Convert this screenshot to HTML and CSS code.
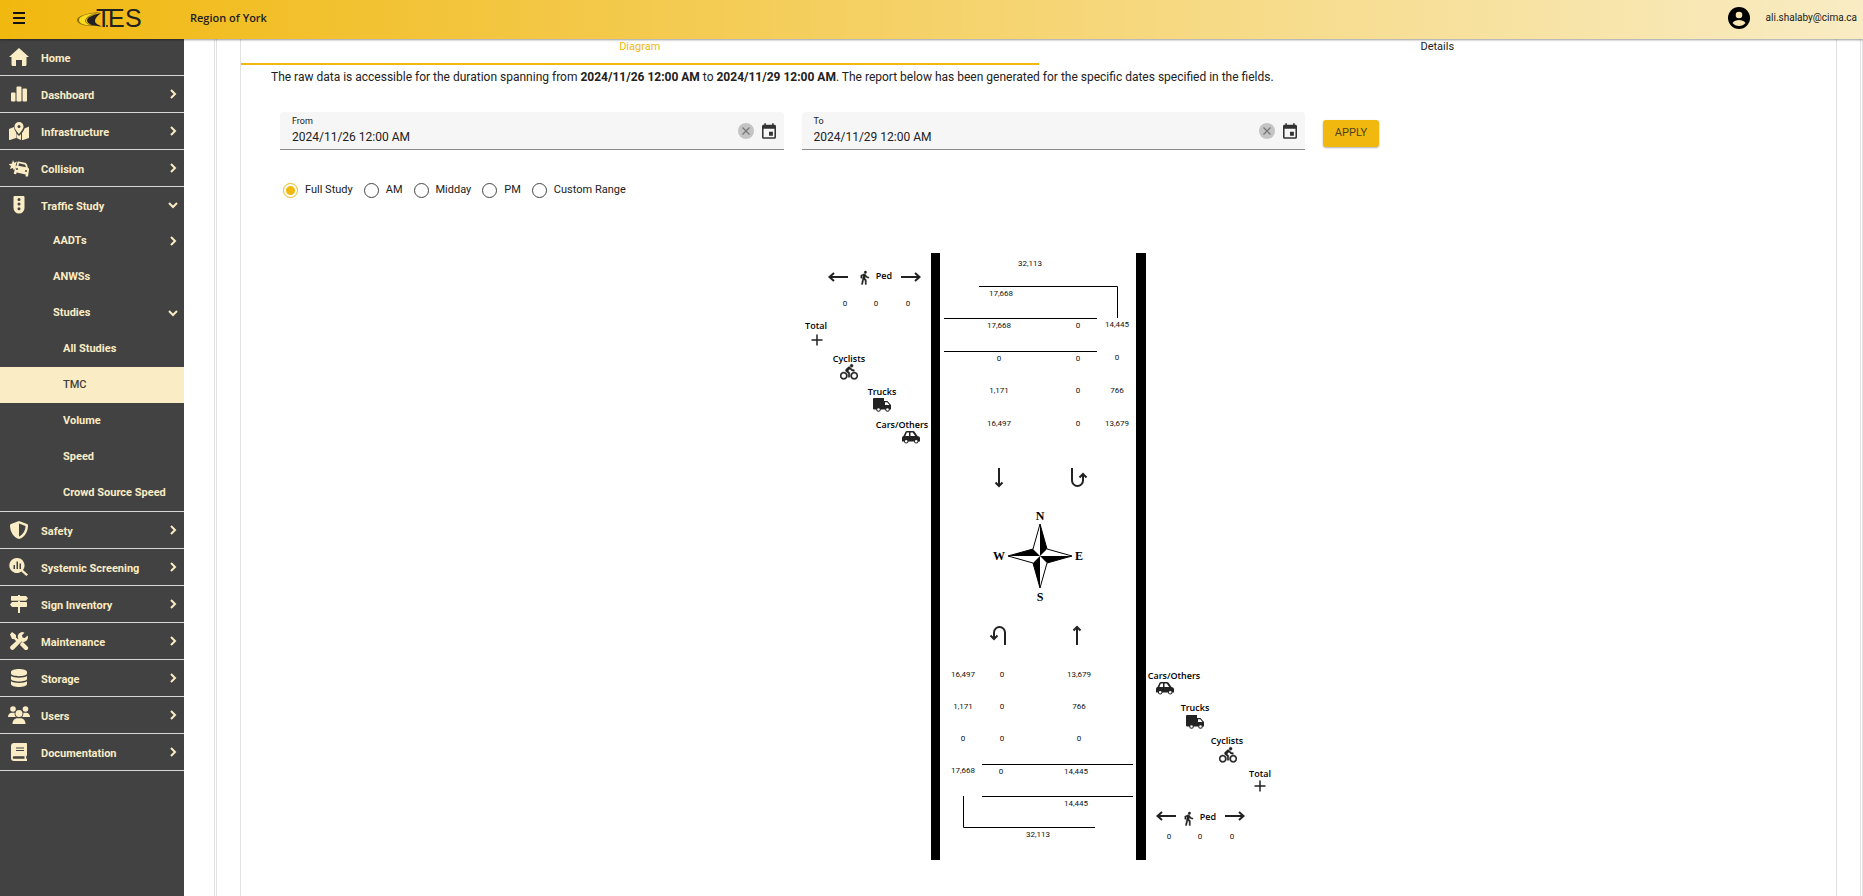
FILE: index.html
```html
<!DOCTYPE html>
<html lang="en">
<head>
<meta charset="utf-8">
<title>TES - Traffic Study TMC</title>
<link rel="stylesheet" href="styles.css">
</head>
<body>
<svg class="sprite" aria-hidden="true">
  <symbol id="chev" viewBox="0 0 10 10"><path d="M3 1l4 4-4 4" fill="none" stroke="currentColor" stroke-width="2"/></symbol>
  <symbol id="chev-down" viewBox="0 0 10 10"><path d="M1 3l4 4 4-4" fill="none" stroke="currentColor" stroke-width="2"/></symbol>
  <symbol id="clear" viewBox="0 0 16 16"><circle cx="8" cy="8" r="8" fill="#c4c4c4"/><path d="M4.500 4.500l7 7M11.500 4.500l-7 7" stroke="#757575" stroke-width="1.200"/></symbol>
  <symbol id="calendar" viewBox="3 1 18 20"><path d="M17 12h-5v5h5v-5zM16 1v2H8V1H6v2H5c-1.110 0-2 .9-2 2v14a2 2 0 0 0 2 2h14c1.100 0 2-.9 2-2V5c0-1.100-.9-2-2-2h-1V1h-2zm3 18H5V8h14v11z" fill="#333"/></symbol>
  <symbol id="walk" viewBox="0 0 24 24"><path d="M13.500 5.500c1.100 0 2-.9 2-2s-.9-2-2-2-2 .9-2 2 .9 2 2 2zM9.800 8.900 7 23h2.100l1.800-8 2.100 2v6h2v-7.500l-2.100-2 .6-3C14.800 12 16.800 13 19 13v-2c-1.900 0-3.500-1-4.300-2.400l-1-1.600c-.4-.6-1-1-1.700-1-.3 0-.5.1-.8.1L6 8.300V13h2V9.600l1.800-.7" stroke="#222" stroke-width=".6"/></symbol>
  <symbol id="bike" viewBox="0 0 24 24"><path d="M15.500 5.500c1.100 0 2-.9 2-2s-.9-2-2-2-2 .9-2 2 .9 2 2 2zM5 12c-2.800 0-5 2.200-5 5s2.200 5 5 5 5-2.200 5-5-2.200-5-5-5zm0 8.200c-1.800 0-3.200-1.400-3.200-3.200s1.400-3.200 3.200-3.200 3.200 1.400 3.200 3.200-1.400 3.200-3.200 3.200zm5.800-9.700 2.400-2.400.8.800c1.300 1.300 3 2.100 5.100 2.100V9c-1.500 0-2.700-.6-3.600-1.500l-1.900-1.900c-.5-.4-1-.6-1.600-.6s-1.100.2-1.400.6L7.800 8.400c-.4.4-.6.900-.6 1.400 0 .6.200 1.100.6 1.400L11 14v5h2v-6.200l-2.200-2.300zM19 12c-2.800 0-5 2.200-5 5s2.200 5 5 5 5-2.200 5-5-2.200-5-5-5zm0 8.200c-1.800 0-3.200-1.400-3.200-3.200s1.400-3.200 3.200-3.200 3.200 1.400 3.200 3.200-1.400 3.200-3.200 3.200z" stroke="#222" stroke-width=".5"/></symbol>
  <symbol id="truck" viewBox="0 0 18 14"><path fill-rule="evenodd" d="M1 0h10v3h3.500L18 7v4.500h-1.200a2.300 2.300 0 0 1-4.600 0H7.800a2.300 2.300 0 0 1-4.600 0H1a1 1 0 0 1-1-1V1a1 1 0 0 1 1-1zm11 4.200V7h4.500l-2.300-2.800zM5.500 10.200a1.300 1.300 0 1 0 0 2.600 1.300 1.300 0 0 0 0-2.600zm9 0a1.300 1.300 0 1 0 0 2.600 1.300 1.300 0 0 0 0-2.600z"/></symbol>
  <symbol id="car" viewBox="0 0 18 13"><path fill-rule="evenodd" d="M5 0h6c.6 0 1 .2 1.400.6L15.500 5l1.500.5c.6.300 1 .9 1 1.500v3.500h-1.400a2.400 2.400 0 0 1-4.700 0H6.600a2.400 2.400 0 0 1-4.700 0H0V7c0-1 .5-1.800 1.500-2L3.500.8C3.800.3 4.300 0 5 0zm-.2 1.500L3.400 5H7V1.500zm3.700 0V5h4.700l-2.500-3.500zM4.200 8.900a1.300 1.300 0 1 0 0 2.600 1.300 1.300 0 0 0 0-2.600zm10 0a1.300 1.300 0 1 0 0 2.600 1.300 1.300 0 0 0 0-2.600z"/></symbol>
  <symbol id="plus" viewBox="0 0 12 12"><path d="M6 .5v11M.5 6h11" stroke="#222" stroke-width="1.500"/></symbol>
  <symbol id="arrow" viewBox="0 0 20 10"><path d="M0 5h18M14 1l4.500 4L14 9" fill="none" stroke="#222" stroke-width="2"/></symbol>
  <symbol id="up" viewBox="0 0 10 20"><path d="M5 20V2M1.500 5.500 5 2l3.500 3.500" fill="none" stroke="#222" stroke-width="2"/></symbol>
  <symbol id="uturn" viewBox="0 0 18 20"><path d="M2 0v12.500a5.500 5.500 0 0 0 11 0V6M9.500 9.500 13 6l3.500 3.500" fill="none" stroke="#222" stroke-width="2"/></symbol>
</svg>

<header class="topbar">
  <button class="menu" aria-label="Toggle menu"><svg width="14" height="12" viewBox="0 0 14 12"><path d="M1 1h12M1 6h12M1 11h12" stroke="#111" stroke-width="2"/></svg></button>
  <svg class="logo" width="68" height="36" viewBox="0 0 68 36" role="img" aria-label="TES">
    <path d="M24 12C11 13 1 16 1 20c0 3 5 6 15 6h6c-9-1-13-3-12-6 1-3 6-5 14-8z" fill="#8a6d0c"/>
    <path d="M20 13C10 14 3 16.500 3 20s5 5 12 5.500C9 23.500 8 21 10 18.500 12 16 15 14.500 20 13z" fill="#f9dc1c"/>
    <path d="M25 13c-9 2-14 4.500-14 7.500 0 3.500 6 5.500 15 6-5-2-7-3.500-7-5.500 0-2.500 2-5 6-8z" fill="#222"/>
    <text class="logo-text" x="20" y="27">T</text><text class="logo-text" x="32" y="27">E</text><text class="logo-text" x="49" y="27">S</text>
    <circle cx="31" cy="26" r="1" fill="#222"/>
  </svg>
  <strong class="region">Region of York</strong>
  <div class="account">
    <svg width="22" height="22" viewBox="0 0 22 22"><circle cx="11" cy="11" r="11"/><circle cx="11" cy="8" r="3.300" fill="#f9e6b3"/><path d="M4.500 16c1.500-2.200 4-3 6.500-3s5 .8 6.500 3c-1.500 2-4 3-6.500 3s-5-1-6.500-3z" fill="#f9e6b3"/></svg>
    <span>ali.shalaby@cima.ca</span>
  </div>
</header>

<div class="shell">
<nav class="sidebar">
  <a class="item" href="#"><svg class="ico" viewBox="0 0 20 18"><path d="M10 0 0 9h2.500v7.500c0 .8.500 1.500 1.500 1.500h3v-6h6v6h3c1 0 1.500-.7 1.500-1.500V9H20z"/></svg><span>Home</span></a>
  <a class="item" href="#"><svg class="ico" viewBox="0 0 20 18"><rect x="2" y="7.500" width="4.500" height="9" rx="1"/><rect x="7.500" y="1.500" width="5" height="15" rx="1"/><rect x="13.500" y="3.500" width="4.500" height="13" rx="1"/></svg><span>Dashboard</span><svg class="chev"><use href="#chev"/></svg></a>
  <a class="item" href="#"><svg class="ico" viewBox="0 0 20 18"><path fill-rule="evenodd" d="M10 0a4.500 4.500 0 0 1 4.500 4.500C14.500 7 11 11 10 12 9 11 5.500 7 5.500 4.500A4.500 4.500 0 0 1 10 0zm0 3a1.500 1.500 0 1 0 0 3 1.500 1.500 0 0 0 0-3z"/><path d="M0 7l5-2c.2 2 1.200 4 2.200 5.500L7 16 1 18H0zM13 11c1-1 2-3 2.500-4.500L20 4.500V16l-6 2h-1zM7.500 11.500 10 14l2-2v6l-4.500-2z"/></svg><span>Infrastructure</span><svg class="chev"><use href="#chev"/></svg></a>
  <a class="item" href="#"><svg class="ico" viewBox="0 0 20 18"><path fill-rule="evenodd" d="M4 1l1.200 2.700L8 2.500 7 5l-.8 5-1.700 1-.5-2-3 1 1-3-2.500-1.500L3 4.500zM9.500 2.500l6.500 1.200c1 .3 1.500.8 2 1.800l.8 3c1 .5 1.400 1.500 1.200 2.500l-1 6.500h-2.500l.2-2-9-2-.7 1.800-2.300-.5L6.400 8c.2-.8.700-1.300 1.300-1.600L8.200 3.600c.200-.8.700-1.100 1.300-1.100zM10 4.300l-.6 2.500 7.500 1.500-.8-2.500zM8 9a1 1 0 1 0 0 2 1 1 0 0 0 0-2zm9 2a1 1 0 1 0 0 2 1 1 0 0 0 0-2z"/></svg><span>Collision</span><svg class="chev"><use href="#chev"/></svg></a>
  <div class="group">
    <a class="item" href="#"><svg class="ico" viewBox="0 0 20 18"><path fill-rule="evenodd" d="M5.500 0h9c.8 0 1 .6 1 1.300V12a5.500 5.500 0 0 1-11 0V1.300C4.500.6 4.700 0 5.500 0zM10 2a1.500 1.500 0 1 0 0 3 1.500 1.500 0 0 0 0-3zm0 4.600a1.500 1.500 0 1 0 0 3 1.500 1.500 0 0 0 0-3zm0 4.600a1.500 1.500 0 1 0 0 3 1.500 1.500 0 0 0 0-3z"/></svg><span>Traffic Study</span><svg class="chev"><use href="#chev-down"/></svg></a>
    <a class="sub" href="#"><span>AADTs</span><svg class="chev"><use href="#chev"/></svg></a>
    <a class="sub" href="#"><span>ANWSs</span></a>
    <a class="sub" href="#"><span>Studies</span><svg class="chev"><use href="#chev-down"/></svg></a>
    <a class="sub leaf" href="#">All Studies</a>
    <a class="sub leaf active" href="#">TMC</a>
    <a class="sub leaf" href="#">Volume</a>
    <a class="sub leaf" href="#">Speed</a>
    <a class="sub leaf" href="#">Crowd Source Speed</a>
  </div>
  <a class="item" href="#"><svg class="ico" viewBox="0 0 20 18"><path fill-rule="evenodd" d="M10 0l8 3c.7.300 1 .7 1 1.400C19 10 16 16 10 18 4 16 1 10 1 4.400 1 3.700 1.300 3.300 2 3zm0 2.500v13c4-1.800 6.500-6 6.500-10.500z"/></svg><span>Safety</span><svg class="chev"><use href="#chev"/></svg></a>
  <a class="item" href="#"><svg class="ico" viewBox="0 0 20 18"><path fill-rule="evenodd" d="M8 0a7.500 7.500 0 0 1 6 12l5 4.500-1.700 1.500-5-4.500A7.500 7.500 0 1 1 8 0zM4.500 7v4H6V7zm3-3.500V11H9V3.500zm3 2V11H12V5.500z"/></svg><span>Systemic Screening</span><svg class="chev"><use href="#chev"/></svg></a>
  <a class="item" href="#"><svg class="ico" viewBox="0 0 20 18"><path d="M9 0h2v1h6l2 2.300L17 5.700H3c-.6 0-1-.4-1-1V2c0-.6.4-1 1-1h6zM9 6h2v1h6c.6 0 1 .4 1 1v3c0 .6-.4 1-1 1h-6v6H9v-6H3L1 9.500 3 7h6z"/></svg><span>Sign Inventory</span><svg class="chev"><use href="#chev"/></svg></a>
  <a class="item" href="#"><svg class="ico" viewBox="0 0 20 18"><path d="M3 0l4 3v2.500l3 2.500-2 2-3-3H3L1 2.500zM18.500 3.500a4.500 4.500 0 0 1-6 6L5 17.200a2.200 2.200 0 0 1-3.200-3.200L9.500 7a4.500 4.500 0 0 1 6-6.300L13 3.200 13.500 5.500l2.300.5zM12 10.500l2-.5 4.500 4.500a2 2 0 0 1-3 3L11 13z"/></svg><span>Maintenance</span><svg class="chev"><use href="#chev"/></svg></a>
  <a class="item" href="#"><svg class="ico" viewBox="0 0 20 18"><path d="M2 3c0-4 16-4 16 0v1.500c0 3.500-16 3.500-16 0zM2 7c3 2.200 13 2.200 16 0v3c0 3.300-16 3.300-16 0zM2 12.300c3 2.200 13 2.200 16 0V15c0 4-16 4-16 0z"/></svg><span>Storage</span><svg class="chev"><use href="#chev"/></svg></a>
  <a class="item" href="#"><svg class="ico wide" viewBox="0 0 22 18"><circle cx="5" cy="3" r="2.800"/><circle cx="17.500" cy="3" r="2.800"/><circle cx="11" cy="7.500" r="3.500"/><path d="M0 11c0-2.500 1.500-4.200 4-4.200h1.500c.5 0 .8.100 1.200.3-.2 1.600.3 3 1.300 3.900zM22 11c0-2.500-1.500-4.200-4-4.200h-1.500c-.5 0-.8.1-1.200.3.200 1.600-.3 3-1.300 3.900zM4.500 18c0-3.500 2-5.800 5-5.800h3c3 0 5 2.300 5 5.800z"/></svg><span>Users</span><svg class="chev"><use href="#chev"/></svg></a>
  <a class="item" href="#"><svg class="ico" viewBox="0 0 20 18"><path fill-rule="evenodd" d="M5 0h12c.6 0 1 .4 1 1v11c0 .6-.3.9-.8 1v2.800H18V18H5c-2 0-3-1.200-3-3V3c0-1.800 1.200-3 3-3zm0 13.200c-1.600 0-1.600 2.600 0 2.600h10.500v-2.600zM7 4.500v1h8v-1zm0 2.500v1h8V7z"/></svg><span>Documentation</span><svg class="chev"><use href="#chev"/></svg></a>
</nav>

<main class="content">
  <div class="card"><div class="inner"><section class="panel">
    <div class="tabs" role="tablist">
      <button class="tab selected" role="tab" aria-selected="true">Diagram</button>
      <button class="tab" role="tab" aria-selected="false">Details</button>
    </div>
    <p class="intro">The raw data is accessible for the duration spanning from <b>2024/11/26 12:00 AM</b> to <b>2024/11/29 12:00 AM</b>. The report below has been generated for the specific dates specified in the fields.</p>
    <form class="filters">
      <div class="field">
        <div class="entry"><label for="from">From</label><input id="from" type="text" value="2024/11/26 12:00 AM"></div>
        <button type="button" class="icon-btn" aria-label="Clear from"><svg width="16" height="16"><use href="#clear"/></svg></button>
        <button type="button" class="icon-btn" aria-label="Pick from date"><svg width="14" height="16"><use href="#calendar"/></svg></button>
      </div>
      <div class="field">
        <div class="entry"><label for="to">To</label><input id="to" type="text" value="2024/11/29 12:00 AM"></div>
        <button type="button" class="icon-btn" aria-label="Clear to"><svg width="16" height="16"><use href="#clear"/></svg></button>
        <button type="button" class="icon-btn" aria-label="Pick to date"><svg width="14" height="16"><use href="#calendar"/></svg></button>
      </div>
      <button type="button" class="apply">APPLY</button>
    </form>
    <div class="periods">
      <label><input type="radio" name="period" checked>Full Study</label>
      <label><input type="radio" name="period">AM</label>
      <label><input type="radio" name="period">Midday</label>
      <label><input type="radio" name="period">PM</label>
      <label><input type="radio" name="period">Custom Range</label>
    </div>

    <svg class="diagram" width="480" height="607" viewBox="799 253 480 607" role="img" aria-label="Turning movement counts">
      <path d="M931 253h9v607h-9zM1136 253h10v607h-10z"/>
      <path class="line" d="M979 286.500h138.500V318M944 318.500h153M944 351.500h153M982 764.500h151M982 796.500h151M963.500 796v31.500H1095"/>
      <g class="count">
        <text x="1030" y="266">32,113</text><text x="1001" y="296">17,668</text>
        <text x="999" y="328">17,668</text><text x="1078" y="328">0</text><text x="1117" y="327">14,445</text>
        <text x="999" y="361">0</text><text x="1078" y="361">0</text><text x="1117" y="360">0</text>
        <text x="999" y="393">1,171</text><text x="1078" y="393">0</text><text x="1117" y="393">766</text>
        <text x="999" y="426">16,497</text><text x="1078" y="426">0</text><text x="1117" y="426">13,679</text>
        <text x="845" y="306">0</text><text x="876" y="306">0</text><text x="908" y="306">0</text>
        <text x="963" y="677">16,497</text><text x="1002" y="677">0</text><text x="1079" y="677">13,679</text>
        <text x="963" y="709">1,171</text><text x="1002" y="709">0</text><text x="1079" y="709">766</text>
        <text x="963" y="741">0</text><text x="1002" y="741">0</text><text x="1079" y="741">0</text>
        <text x="963" y="773">17,668</text><text x="1001" y="774">0</text><text x="1076" y="774">14,445</text>
        <text x="1076" y="806">14,445</text><text x="1038" y="837">32,113</text>
        <text x="1169" y="839">0</text><text x="1200" y="839">0</text><text x="1232" y="839">0</text>
      </g>
      <g class="kind">
        <text x="884" y="279">Ped</text><text x="816" y="329">Total</text><text x="849" y="362">Cyclists</text><text x="882" y="395">Trucks</text><text x="902" y="428">Cars/Others</text>
        <text x="1174" y="679">Cars/Others</text><text x="1195" y="711">Trucks</text><text x="1227" y="744">Cyclists</text><text x="1260" y="777">Total</text><text x="1208" y="820">Ped</text>
      </g>
      <g class="glyph">
        <use href="#arrow" width="20" height="10" transform="translate(848 282) rotate(180)"/><use href="#walk" x="857" y="270" width="15" height="15"/><use href="#arrow" x="901" y="272" width="20" height="10"/>
        <use href="#plus" x="811" y="334" width="12" height="12"/><use href="#bike" x="840" y="363" width="18" height="18"/><use href="#truck" x="873" y="398" width="18" height="14"/><use href="#car" x="902" y="431" width="18" height="13"/>
        <use href="#car" x="1156" y="682" width="18" height="13"/><use href="#truck" x="1186" y="715" width="18" height="14"/><use href="#bike" x="1219" y="746" width="18" height="18"/><use href="#plus" x="1254" y="780" width="12" height="12"/>
        <use href="#arrow" width="20" height="10" transform="translate(1176 821) rotate(180)"/><use href="#walk" x="1181" y="811" width="15" height="15"/><use href="#arrow" x="1225" y="811" width="20" height="10"/>
        <use href="#up" width="10" height="20" transform="translate(1004 488) rotate(180)"/><use href="#uturn" x="1070" y="468" width="18" height="20"/>
        <use href="#uturn" width="18" height="20" transform="translate(1007 645) rotate(180)"/><use href="#up" x="1072" y="625" width="10" height="20"/>
      </g>
      <g class="rose">
        <path class="pale" d="M1040 524l7 25 25 7-25 7-7 25-7-25-25-7 25-7z"/>
        <path d="M1040 524l7 25-7 7zM1072 556l-25 7-7-7zM1040 588l-7-25 7-7zM1008 556l25-7 7 7z"/>
        <text x="1040" y="520">N</text><text x="1079" y="560">E</text><text x="1040" y="601">S</text><text x="999" y="560">W</text>
      </g>
    </svg>
  </section></div></div>
</main>
</div>
</body>
</html>
```
FILE: styles.css
```css
* { box-sizing: border-box; }
body { margin: 0; height: 100vh; overflow: hidden; display: flex; flex-direction: column; font: 11px/16px Roboto, "Noto Sans", sans-serif; color: #212121; background: #fff; }
button { border: 0; padding: 0; background: none; font: inherit; color: inherit; cursor: pointer; }
.sprite { display: none; }

.topbar { flex: none; height: 39px; padding: 0 6px 3px 12px; display: flex; align-items: center; background: linear-gradient(90deg, #f1b80f, #f9ecc4); box-shadow: 0 1px 2px rgba(0, 0, 0, .4); z-index: 1; }
.menu { width: 14px; height: 36px; display: flex; align-items: center; }
.logo { margin-left: 50px; }
.logo-text { font: 25px/30px "Liberation Sans", sans-serif; fill: #222; }
.region { margin-left: 46px; font-family: "Open Sans", sans-serif; font-weight: 600; }
.account { margin-left: auto; display: flex; align-items: center; gap: 16px; font-size: 10px; }

.shell { flex: 1; min-height: 0; display: flex; }
.sidebar { width: 184px; flex: none; background: #424242; color: #faecc4; }
.sidebar a { display: flex; align-items: center; color: inherit; text-decoration: none; font-weight: 700; }
.item { height: 37px; padding: 0 6px 0 9px; border-bottom: 1px solid #d8d8d8; }
.item span { padding: 4px 0 0 12px; }
.ico { width: 20px; height: 18px; fill: currentColor; }
.ico.wide { width: 22px; margin: 0 -1px; }
.chev { width: 10px; height: 10px; margin-left: auto; }
.group { border-bottom: 1px solid #d8d8d8; }
.group .item { height: 36px; border: 0; }
.sub { height: 36px; padding: 0 6px 1px 53px; }
.leaf { padding-left: 63px; }
.sidebar .active { background: #faecc4; color: #424242; font-weight: 500; }

.content { flex: 1; min-width: 0; padding-left: 30px; display: flex; }
.card { flex: 1; display: flex; border: solid #e2e2e2; border-width: 0 1px; padding: 0 1px; }
.inner { flex: 1; display: flex; border: solid #e2e2e2; border-width: 0 1px; padding: 0 23px; }
.panel { flex: 1; min-width: 0; border: solid #e2e2e2; border-width: 0 1px; }
.tabs { display: flex; height: 26px; }
.tab { flex: 1; padding-bottom: 8px; border-bottom: 2px solid transparent; }
.tab.selected { color: #f1b80f; border-color: #f1b80f; }
.intro { margin: 4px 30px 27px; font-size: 12px; }
.filters { display: flex; align-items: center; gap: 18px; padding: 0 457px 0 39px; }
.field { flex: 1; height: 38px; display: flex; align-items: center; gap: 8px; padding: 0 8px 0 12px; background: #f6f6f6; border-bottom: 1px solid #8a8a8a; border-radius: 4px 4px 0 0; }
.entry { flex: 1; min-width: 0; display: flex; flex-direction: column; padding-bottom: 2px; }
.entry label { font-size: 9px; line-height: 14px; }
.entry input { border: 0; padding: 0; height: 18px; background: none; font: inherit; font-size: 12px; color: inherit; outline: 0; }
.icon-btn { display: flex; }
.apply { width: 56px; height: 27px; margin-top: 4px; border-radius: 3px; background: #f1b80f; color: #4d421f; box-shadow: 0 1px 2px rgba(0, 0, 0, .3); }
.periods { display: flex; gap: 11px; margin: 32px 0 0 42px; }
.periods label { display: flex; align-items: center; gap: 7px; }
.periods input { appearance: none; width: 15px; height: 15px; margin: 0; border: 1px solid #444; border-radius: 50%; }
.periods input:checked { border-color: #f1b80f; background: radial-gradient(#f1b80f 4px, transparent 5px); }

.diagram { display: block; margin: 55px auto 0; }
.line { fill: none; stroke: #000; }
.count { font-size: 8px; text-anchor: middle; fill: #111; }
.kind { font: 600 9px/12px "Open Sans", sans-serif; text-anchor: middle; }
.glyph { fill: #222; }
.rose { font: 700 12px/14px "Liberation Serif", serif; text-anchor: middle; }
.pale { fill: #fff; stroke: #000; }
```
